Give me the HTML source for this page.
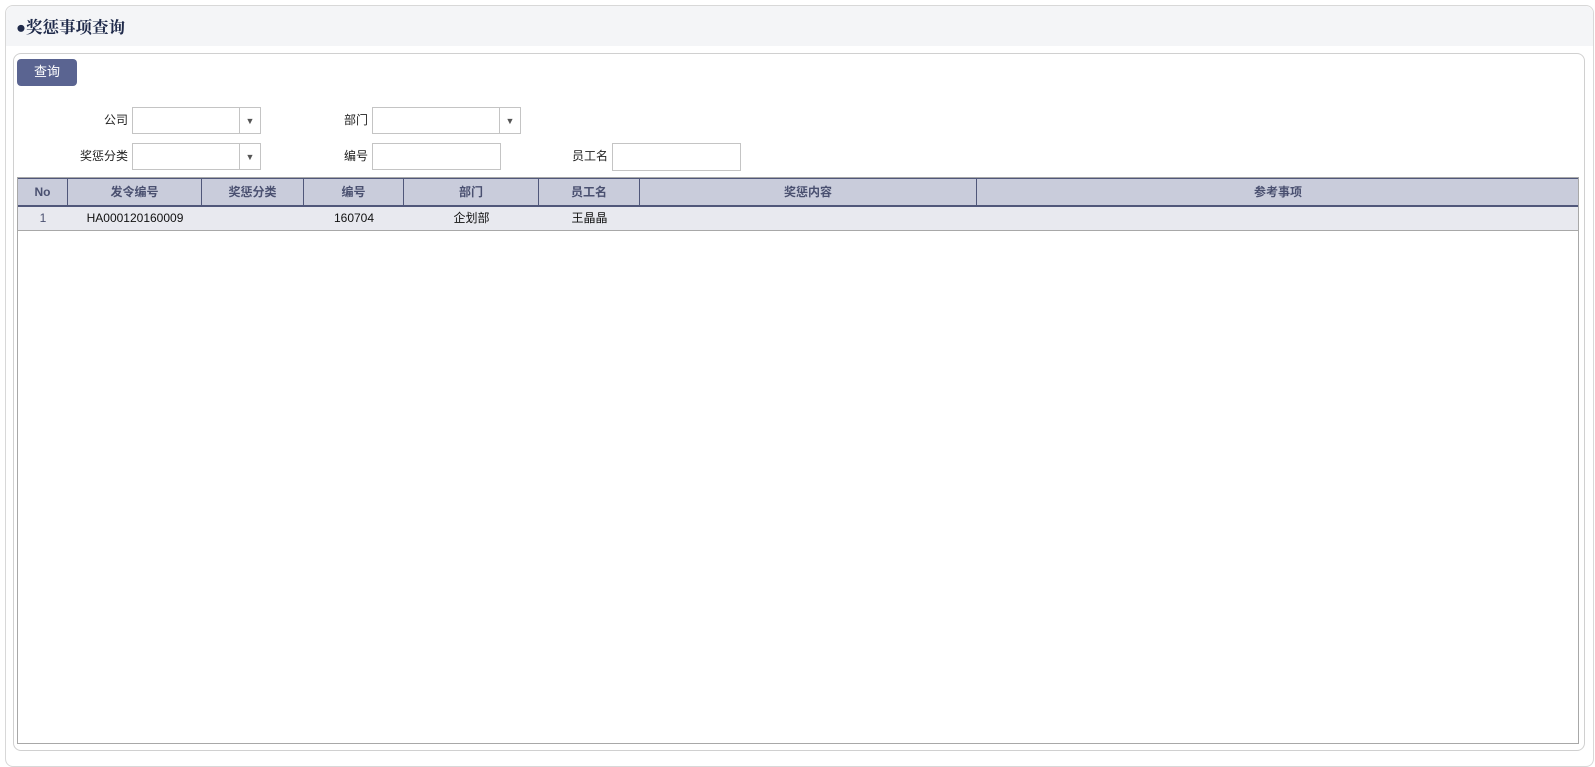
<!DOCTYPE html>
<html><head><meta charset="utf-8"><style>
body{margin:0;width:1595px;height:751px;background:#fff;font-family:"Liberation Sans","Noto Sans CJK SC",sans-serif;font-size:12px;color:#222;position:relative;overflow:hidden}
.outer{position:absolute;left:5px;top:5px;width:1587px;height:760px;border:1px solid #d8d8d8;border-radius:8px;background:#fff}
.band{position:absolute;left:0;top:0;right:0;height:40px;background:#f4f5f7;border-radius:8px 8px 0 0}
.title{position:absolute;left:10px;top:8px;font-size:16.5px;font-weight:bold;color:#1f2a4a;font-family:"Liberation Serif","Noto Serif CJK SC",serif}
.inner{position:absolute;left:13px;top:53px;width:1570px;height:696px;border:1px solid #d0d0d0;border-radius:8px;background:#fff}
.btn{position:absolute;left:17px;top:59px;width:60px;height:27px;background:#5a6491;border-radius:4px;color:#fff;font-size:13px;text-align:center;line-height:26px}
.lbl{position:absolute;font-size:12px;text-align:right;width:60px;line-height:27px}
.box{position:absolute;height:27px;border:1px solid #c4c4c4;background:#fff;box-sizing:border-box}
.dd{position:absolute;right:0;top:0;bottom:0;width:20px;border-left:1px solid #c4c4c4;text-align:center;line-height:26px;font-size:9px;color:#555}
.tbl{position:absolute;left:17px;top:177px;width:1562px;height:567px;border:1px solid #a8a8a8;box-sizing:border-box;background:#fff}
.hd{position:absolute;left:0;top:0;right:0;height:29px;background:#c9ccdb;border-top:1px solid #50577a;border-bottom:2px solid #50577a;box-sizing:border-box}
.row{position:absolute;left:0;top:29px;right:0;height:24px;background:#e8e9ef;border-bottom:1px solid #a8a8a8;box-sizing:border-box}
.c{position:absolute;top:0;height:100%;text-align:center;box-sizing:border-box}
.hd .c{border-right:1px solid #50577a;font-weight:bold;color:#4a5070;line-height:26px}
.row .c{line-height:23px;color:#111}
</style></head><body>
<div class="outer"><div class="band"><div class="title">●奖惩事项查询</div></div></div>
<div class="inner"></div>
<div class="btn">查询</div>
<div class="lbl" style="left:68px;top:107px">公司</div>
<div class="box" style="left:132px;top:107px;width:129px"><div class="dd">▼</div></div>
<div class="lbl" style="left:308px;top:107px">部门</div>
<div class="box" style="left:372px;top:107px;width:149px"><div class="dd">▼</div></div>
<div class="lbl" style="left:68px;top:143px">奖惩分类</div>
<div class="box" style="left:132px;top:143px;width:129px"><div class="dd">▼</div></div>
<div class="lbl" style="left:308px;top:143px">编号</div>
<div class="box" style="left:372px;top:143px;width:129px"></div>
<div class="lbl" style="left:548px;top:143px">员工名</div>
<div class="box" style="left:612px;top:143px;width:129px;height:28px"></div>
<div class="tbl">
<div class="hd">
<div class="c" style="left:0;width:50px">No</div>
<div class="c" style="left:50px;width:134px">发令编号</div>
<div class="c" style="left:184px;width:102px">奖惩分类</div>
<div class="c" style="left:286px;width:100px">编号</div>
<div class="c" style="left:386px;width:135px">部门</div>
<div class="c" style="left:521px;width:101px">员工名</div>
<div class="c" style="left:622px;width:337px">奖惩内容</div>
<div class="c" style="left:959px;width:602px;border-right:none">参考事项</div>
</div>
<div class="row">
<div class="c" style="left:0;width:50px;color:#4a5070">1</div>
<div class="c" style="left:50px;width:134px">HA000120160009</div>
<div class="c" style="left:286px;width:100px">160704</div>
<div class="c" style="left:386px;width:135px">企划部</div>
<div class="c" style="left:521px;width:101px">王晶晶</div>
</div>
</div>
</body></html>
